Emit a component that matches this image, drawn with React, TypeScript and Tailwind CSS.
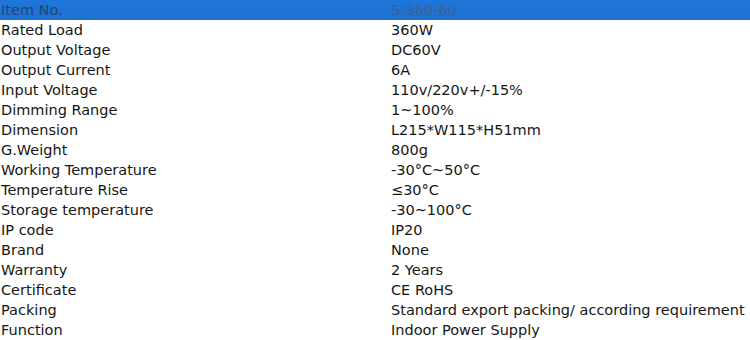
import React from "react";

const rows: [string, string][] = [
  ["Rated Load", "360W"],
  ["Output Voltage", "DC60V"],
  ["Output Current", "6A"],
  ["Input Voltage", "110v/220v+/-15%"],
  ["Dimming Range", "1~100%"],
  ["Dimension", "L215*W115*H51mm"],
  ["G.Weight", "800g"],
  ["Working Temperature", "-30°C~50°C"],
  ["Temperature Rise", "≤30°C"],
  ["Storage temperature", "-30~100°C"],
  ["IP code", "IP20"],
  ["Brand", "None"],
  ["Warranty", "2 Years"],
  ["Certificate", "CE RoHS"],
  ["Packing", "Standard export packing/ according requirement"],
  ["Function", "Indoor Power Supply"],
];

export default function App() {
  return (
    <div
      className="w-[750px] h-[340px] bg-white overflow-hidden text-[14.5px] leading-[20px] text-[#161616]"
      style={{ fontFamily: '"DejaVu Sans", Verdana, sans-serif' }}
    >
      <div className="grid grid-cols-[389px_1fr] h-[20px] bg-gradient-to-b from-[#1f76da] to-[#1d70cf]">
        <div className="pl-[1px] text-[#24457a] whitespace-nowrap">Item No.</div>
        <div className="pl-[2px] text-[#3f5f93] whitespace-nowrap">S-360-60</div>
      </div>
      {rows.map(([k, v]) => (
        <div key={k} className="grid grid-cols-[389px_1fr] h-[20px]">
          <div className="pl-[1px] whitespace-nowrap">{k}</div>
          <div className="pl-[2px] whitespace-nowrap">{v}</div>
        </div>
      ))}
    </div>
  );
}
